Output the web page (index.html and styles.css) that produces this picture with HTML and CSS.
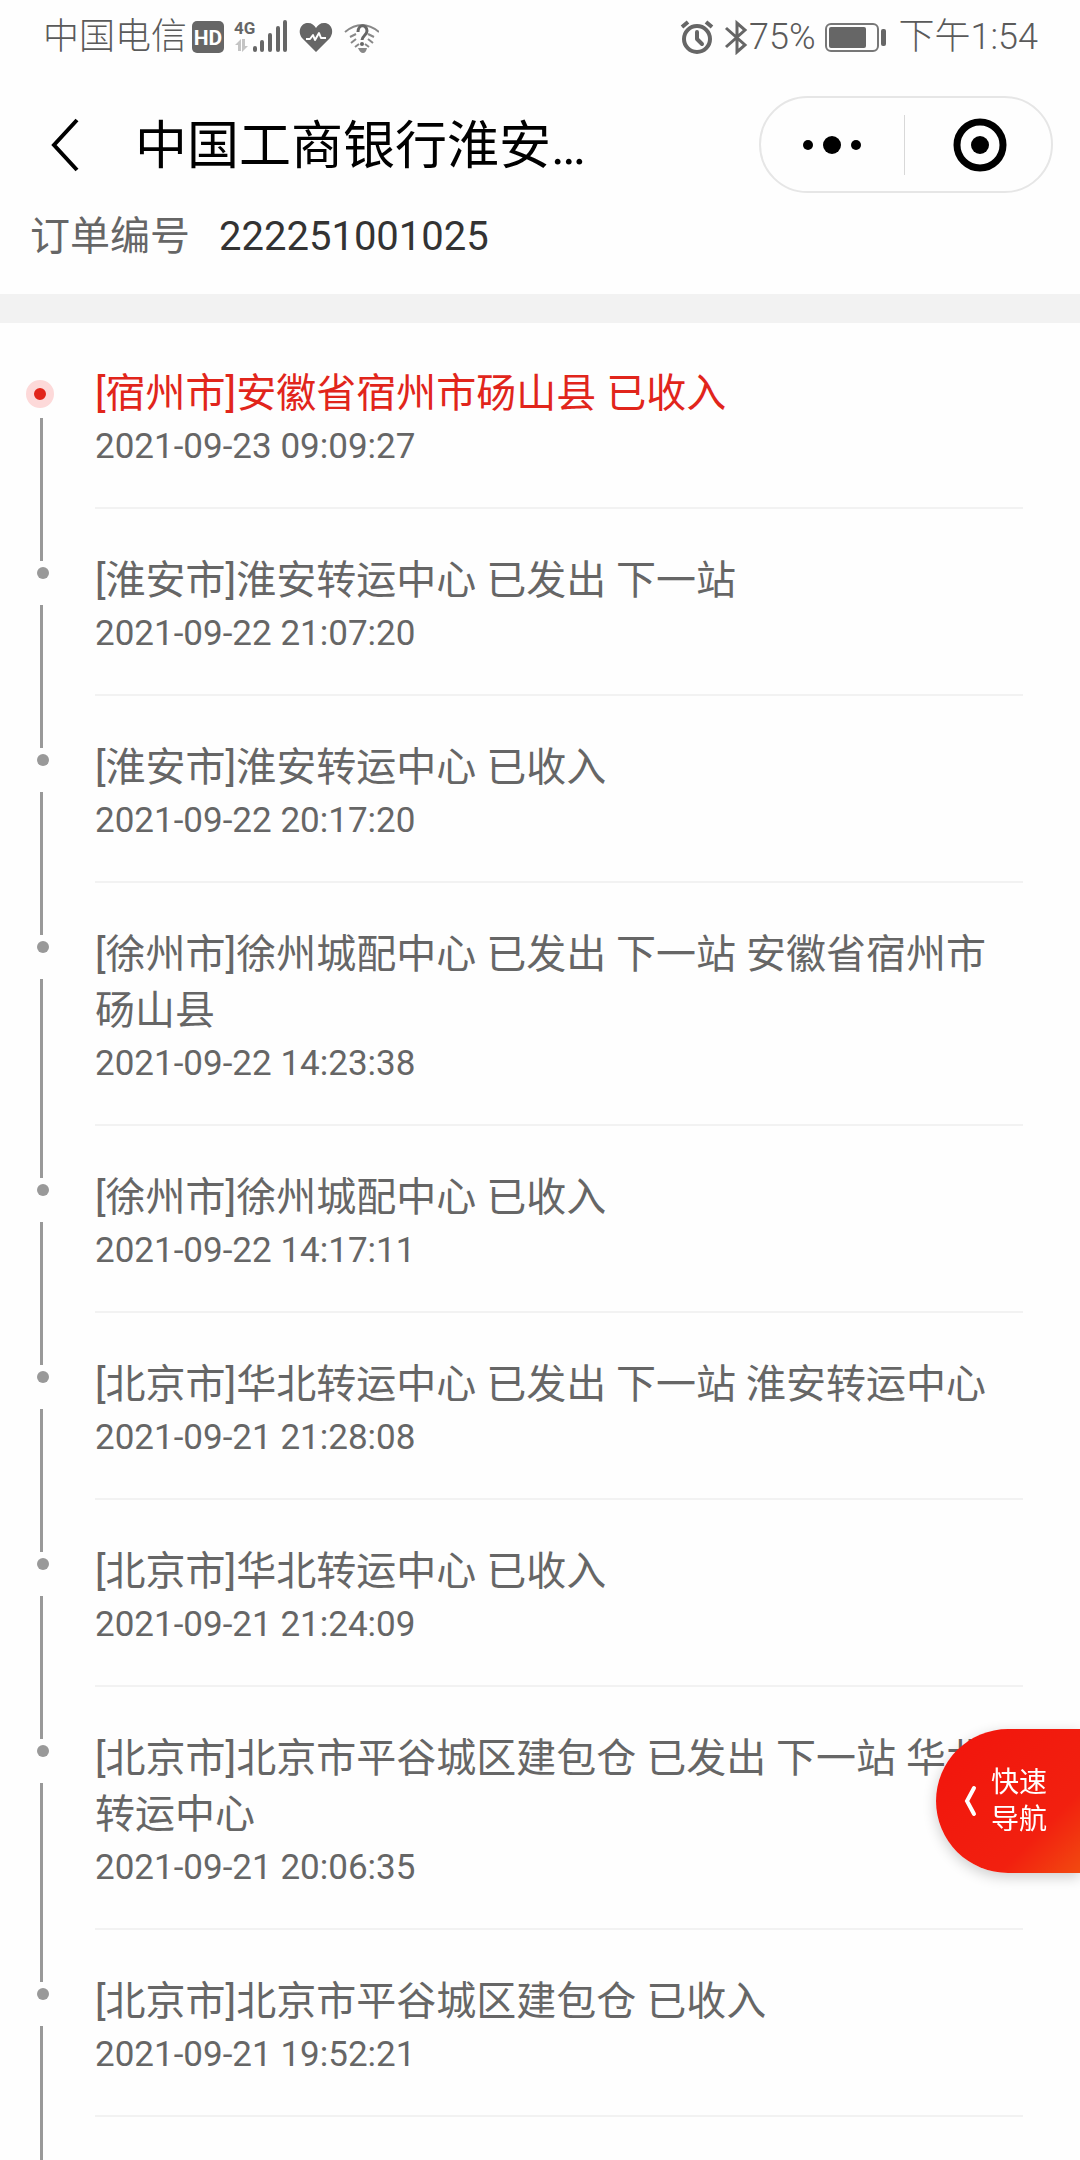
FILE: index.html
```html
<!DOCTYPE html>
<html lang="zh-CN">
<head>
<meta charset="utf-8">
<meta name="viewport" content="width=device-width, initial-scale=1">
<title>订单物流</title>
<link rel="stylesheet" href="styles.css">
</head>
<body>
<div class="status-bar">
  <div class="status-group">
    <span>中国电信</span>
    <svg class="status-icons" width="188" height="36" viewBox="0 0 188 36" aria-hidden="true">
      <rect x="1" y="2" width="32" height="32" rx="5" fill="#666"/>
      <text x="17" y="26" text-anchor="middle" class="hd-text">HD</text>
      <text x="43" y="15" class="net-text">4G</text>
      <g fill="#c4c4c4">
        <path d="M44 26l6-6v12h-3v-6zM51 20h3v7h3l-6 6z"/>
      </g>
      <g stroke="#666" stroke-width="4" stroke-linecap="round">
        <path d="M64 29v2M71 23v8M79 16v15M87 9v22M94 3v28"/>
      </g>
      <path d="M125 33L111 19C106 12 110 4 117 4c4 0 6 2 8 5 2-3 4-5 8-5 7 0 11 8 6 15z" fill="#666"/>
      <path d="M115 20h4l3-4 2 5 4-7 2 5h5" fill="none" stroke="#fff" stroke-width="2" stroke-linejoin="round"/>
      <g fill="none" stroke="#888" stroke-width="2">
        <path d="M154 13q17-14 34 0M159 18l6-3M183 18l-6-3M160 24l5-4M182 24l-5-4M164 28l4-3M178 28l-4-3"/>
        <path d="M167 13c0-8 9-8 9-1 0 4-5 5-5 9" stroke="#666" stroke-width="3"/>
      </g>
      <circle cx="171" cy="25" r="2" fill="#666"/>
      <path d="M167 29h9q-1 5-4 5t-5-5z" fill="#888"/>
    </svg>
  </div>
  <div class="status-group">
    <svg width="70" height="36" viewBox="0 0 70 36" aria-hidden="true" fill="none" stroke="#666">
      <circle cx="18" cy="20" r="13" stroke-width="4"/>
      <path d="M18 13v7l5 5" stroke-width="4" stroke-linecap="round" stroke-linejoin="round"/>
      <path d="M3 8l6-5M33 8l-6-5" stroke-width="4"/>
      <path d="M47 9l19 17-8 7V4l8 7-19 17" stroke-width="3"/>
    </svg>
    <span>75%</span>
    <svg class="battery" width="62" height="36" viewBox="0 0 62 36" aria-hidden="true">
      <rect x="1" y="5" width="52" height="27" rx="5" fill="none" stroke="#777" stroke-width="2"/>
      <rect x="4" y="8" width="37" height="21" rx="2" fill="#666"/>
      <rect x="56" y="10" width="5" height="17" rx="2" fill="#666"/>
    </svg>
    <span>下午1:54</span>
  </div>
</div>

<header class="nav">
  <button class="back" aria-label="返回">
    <svg width="32" height="56" viewBox="0 0 32 56"><path d="M28 3L5 28l23 25" fill="none" stroke="#000" stroke-width="4"/></svg>
  </button>
  <h1 class="title">中国工商银行淮安…</h1>
  <div class="capsule">
    <button class="capsule-btn" aria-label="更多">
      <svg width="60" height="20" viewBox="0 0 60 20"><circle cx="6" cy="10" r="5"/><circle cx="30" cy="10" r="9"/><circle cx="54" cy="10" r="5"/></svg>
    </button>
    <span class="capsule-rule"></span>
    <button class="capsule-btn close" aria-label="关闭">
      <svg width="56" height="56" viewBox="0 0 56 56"><circle cx="28" cy="28" r="23" fill="none" stroke="#000" stroke-width="7"/><circle cx="28" cy="28" r="9"/></svg>
    </button>
  </div>
</header>

<main>
  <section class="order">
    <span class="order-label">订单编号</span>
    <span class="order-number">222251001025</span>
  </section>

  <ol class="timeline">
    <li class="event current">
      <div class="rail"><i class="dot"></i></div>
      <div class="detail"><p class="text">[宿州市]安徽省宿州市砀山县 已收入</p><time>2021-09-23 09:09:27</time></div>
    </li>
    <li class="event">
      <div class="rail"><i class="dot"></i></div>
      <div class="detail"><p class="text">[淮安市]淮安转运中心 已发出 下一站</p><time>2021-09-22 21:07:20</time></div>
    </li>
    <li class="event">
      <div class="rail"><i class="dot"></i></div>
      <div class="detail"><p class="text">[淮安市]淮安转运中心 已收入</p><time>2021-09-22 20:17:20</time></div>
    </li>
    <li class="event">
      <div class="rail"><i class="dot"></i></div>
      <div class="detail"><p class="text">[徐州市]徐州城配中心 已发出 下一站 安徽省宿州市砀山县</p><time>2021-09-22 14:23:38</time></div>
    </li>
    <li class="event">
      <div class="rail"><i class="dot"></i></div>
      <div class="detail"><p class="text">[徐州市]徐州城配中心 已收入</p><time>2021-09-22 14:17:11</time></div>
    </li>
    <li class="event">
      <div class="rail"><i class="dot"></i></div>
      <div class="detail"><p class="text">[北京市]华北转运中心 已发出 下一站 淮安转运中心</p><time>2021-09-21 21:28:08</time></div>
    </li>
    <li class="event">
      <div class="rail"><i class="dot"></i></div>
      <div class="detail"><p class="text">[北京市]华北转运中心 已收入</p><time>2021-09-21 21:24:09</time></div>
    </li>
    <li class="event">
      <div class="rail"><i class="dot"></i></div>
      <div class="detail"><p class="text">[北京市]北京市平谷城区建包仓 已发出 下一站 华北转运中心</p><time>2021-09-21 20:06:35</time></div>
    </li>
    <li class="event">
      <div class="rail"><i class="dot"></i></div>
      <div class="detail"><p class="text">[北京市]北京市平谷城区建包仓 已收入</p><time>2021-09-21 19:52:21</time></div>
    </li>
  </ol>
</main>

<button class="quick-nav">
  <svg width="14" height="32" viewBox="0 0 14 32" aria-hidden="true"><path d="M11 3L4 16l7 13" fill="none" stroke="#fff" stroke-width="4" stroke-linecap="round"/></svg>
  <span>快速<br>导航</span>
</button>
</body>
</html>
```
FILE: styles.css
```css
* {
  box-sizing: border-box;
}

body {
  margin: 0;
  min-height: 100vh;
  background: #fefefe;
  color: #666;
  font-family: Roboto, "Noto Sans CJK SC", sans-serif;
  font-size: 40px;
}

button {
  margin: 0;
  padding: 0;
  border: 0;
  background: none;
  font-family: inherit;
  cursor: pointer;
}

svg {
  display: block;
  flex: none;
}

/* Phone status bar */
.status-bar {
  display: flex;
  justify-content: space-between;
  height: 72px;
  padding: 2px 42px 0 43px;
  color: #5a5a5a;
  font-size: 36px;
  font-weight: 300;
  line-height: 36px;
}

.status-group {
  display: flex;
  align-items: center;
}

.status-icons {
  margin-left: 4px;
}

.battery {
  margin: 0 12px 0 9px;
}

.hd-text {
  fill: #fff;
  font-size: 21px;
  font-weight: 700;
}

.net-text {
  fill: #666;
  font-size: 17px;
  font-weight: 700;
}

/* Title bar */
.nav {
  display: flex;
  align-items: center;
  height: 145px;
  padding: 0 27px 0 49px;
}

.title {
  flex: 1;
  margin: 0 0 0 54px;
  padding-top: 4px;
  color: #000;
  font-size: 52px;
  font-weight: 400;
  line-height: 72px;
  white-space: nowrap;
}

.capsule {
  display: flex;
  align-items: center;
  width: 294px;
  height: 97px;
  border: 2px solid #e6e6e6;
  border-radius: 49px;
}

.capsule-btn {
  display: flex;
  flex: 1;
  align-items: center;
  justify-content: center;
  height: 100%;
}

.close {
  padding-left: 4px;
}

.capsule-rule {
  width: 1px;
  height: 60px;
  background: #d8d8d8;
}

/* Order number */
.order {
  display: flex;
  gap: 29px;
  padding: 0 30px 37px;
  border-bottom: 29px solid #f2f2f2;
  line-height: 40px;
}

.order-number {
  color: #333;
}

/* Shipping timeline */
.timeline {
  margin: 0;
  padding: 42px 57px 0 0;
  overflow: hidden;
  list-style: none;
}

.event {
  display: flex;
}

.rail {
  display: flex;
  flex: none;
  flex-direction: column;
  gap: 26px;
  width: 95px;
  margin-bottom: -9px;
  padding-top: 15px;
}

.rail::after {
  flex: 1;
  width: 3px;
  margin-left: 40px;
  background: #999;
  content: "";
}

.dot {
  width: 12px;
  height: 12px;
  margin-left: 37px;
  border-radius: 50%;
  background: #999;
}

.current .rail {
  gap: 10px;
}

.current .dot {
  width: 28px;
  height: 28px;
  margin-left: 26px;
  border: 8px solid #fdd9d9;
  background: #e1251b;
}

.detail {
  flex: 1;
  min-width: 0;
  margin-bottom: 43px;
  padding: 1px 0 35px;
  border-bottom: 2px solid #f2f2f2;
}

.text {
  margin: 0;
  line-height: 56px;
}

.current .text {
  color: #e1251b;
}

time {
  display: block;
  font-size: 35px;
  line-height: 50px;
}

/* Floating shortcut */
.quick-nav {
  display: flex;
  position: fixed;
  right: 0;
  bottom: 287px;
  gap: 14px;
  align-items: center;
  width: 144px;
  height: 144px;
  padding-left: 27px;
  border-radius: 72px 0 0 72px;
  background: linear-gradient(135deg, #f2140c 0%, #f2200f 72%, #f24a10 100%);
  box-shadow: 0 4px 14px rgba(0, 0, 0, 0.2);
  color: #fff;
  font-size: 28px;
  line-height: 37px;
}
```
